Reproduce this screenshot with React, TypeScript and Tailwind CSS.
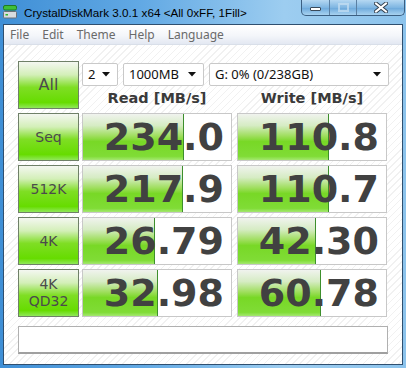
import { ReactNode } from "react";

interface Row {
  label: ReactNode;
  read: string;
  write: string;
  readBar: number;
  writeBar: number;
}

const rows: Row[] = [
  { label: "Seq", read: "234.0", write: "110.8", readBar: 101, writeBar: 91 },
  { label: "512K", read: "217.9", write: "110.7", readBar: 100, writeBar: 91 },
  { label: "4K", read: "26.79", write: "42.30", readBar: 72, writeBar: 78 },
  {
    label: (
      <span className="flex flex-col items-center leading-[17px]">
        <span>4K</span>
        <span>QD32</span>
      </span>
    ),
    read: "32.98",
    write: "60.78",
    readBar: 75,
    writeBar: 83,
  },
];

const LabelButton = ({ children, big }: { children: ReactNode; big?: boolean }) => (
  <div
    className={`w-[61px] h-[48px] shrink-0 border border-[#6f8068] bg-[linear-gradient(to_bottom,#f4f7f1_0%,#d3efb8_28%,#7fde24_55%,#66dc00_88%,#90e85a_100%)] flex items-center justify-center text-[#4b4b4b] [font-family:'DejaVu_Sans',sans-serif] ${big ? "text-[16px]" : "text-[14px]"}`}
  >
    {children}
  </div>
);

const ResultCell = ({ value, bar }: { value: string; bar: number }) => (
  <div className="relative w-[150px] h-[48px] shrink-0 border border-[#c8c8c8] bg-white overflow-hidden flex items-center justify-end pr-[7px]">
    <div
      className="absolute left-0 top-0 bottom-0 border-r border-[#3d8f2c] bg-[linear-gradient(to_bottom,#f0f3ee_0%,#d6ecc4_25%,#9ede5c_48%,#78d826_60%,#80dc36_92%,#a4e870_100%)]"
      style={{ width: bar }}
    />
    <span className="relative text-[38px] leading-none font-bold text-[#414141] [font-family:'DejaVu_Sans',sans-serif]">
      {value}
    </span>
  </div>
);

const Arrow = () => (
  <svg width="8" height="5" viewBox="0 0 8 5">
    <path d="M0 0 H8 L4 4.5 Z" fill="#111" />
  </svg>
);

const Select = ({ text, width }: { text: string; width: string }) => (
  <div
    className={`${width} h-[23px] shrink-0 bg-white border border-[#c9c9c9] rounded-[2px] flex items-center justify-between pl-[5px] pr-[7px] text-[13px] text-[#111] [font-family:'Noto_Sans',sans-serif]`}
  >
    <span>{text}</span>
    <Arrow />
  </div>
);

const TitleIcon = () => (
  <svg width="14" height="14" viewBox="0 0 14 14">
    <rect x="0.5" y="0.5" width="13" height="4.5" rx="1.5" fill="#3fbf3a" stroke="#1f7a24" />
    <rect x="0.5" y="6.5" width="13" height="6.5" rx="1" fill="#d9dcdf" stroke="#6b7178" />
    <rect x="2.5" y="9" width="2.5" height="1.5" fill="#2fb52f" />
  </svg>
);

export default function App() {
  return (
    <div className="w-[406px] h-[368px] overflow-hidden flex flex-col bg-[linear-gradient(to_right,#3f8fd6_0%,#62a9e4_35%,#9dcdf0_70%,#8cc3ec_100%)] [font-family:'Noto_Sans',sans-serif]">
      {/* title bar */}
      <div className="h-[24px] shrink-0 flex items-start">
        <div className="pt-[5px] pl-[3px]">
          <TitleIcon />
        </div>
        <span className="ml-[7px] mt-[4px] text-[11.7px] text-black [font-family:'Liberation_Sans',sans-serif] whitespace-nowrap">
          CrystalDiskMark 3.0.1 x64 &lt;All 0xFF, 1Fill&gt;
        </span>
        <div className="ml-auto mr-[1px] flex h-[16px] border border-t-0 border-[#3b5f82] rounded-b-[5px] overflow-hidden bg-[linear-gradient(to_bottom,#b5d8f2,#7fb6e2_50%,#6aa7da_51%,#a8d2f0)]">
          <div className="w-[28px] flex items-center justify-center border-r border-[#5a7fa2]">
            <div className="w-[11px] h-[4px] mt-[3px] bg-white border border-[#3a4a5a] rounded-[1px]" />
          </div>
          <div className="w-[27px] flex items-center justify-center border-r border-[#5a7fa2]">
            <div className="w-[11px] h-[9px] border-2 border-[#c8dff2] opacity-70" />
          </div>
          <div className="w-[47px] flex items-center justify-center">
            <svg width="14" height="11" viewBox="0 0 14 11">
              <path d="M2 1.5 L12 9.5 M12 1.5 L2 9.5" stroke="#33414f" strokeWidth="4" strokeLinecap="square" />
              <path d="M2 1.5 L12 9.5 M12 1.5 L2 9.5" stroke="#fff" strokeWidth="2" strokeLinecap="square" />
            </svg>
          </div>
        </div>
      </div>

      {/* client area */}
      <div className="mx-[3px] h-[341px] shrink-0 border border-[#2f4f6f] bg-white flex flex-col">
        <div className="h-[20px] shrink-0 flex items-center pl-[6px] gap-[13px] text-[12px] text-[#6a6a6a] bg-[linear-gradient(to_bottom,#ffffff,#f4f6fa_55%,#e3e8f2)] border-b border-[#d9dfe9]">
          <span>File</span>
          <span>Edit</span>
          <span>Theme</span>
          <span>Help</span>
          <span>Language</span>
        </div>

        <div className="flex-1 pl-[14px] pt-[16px] bg-[repeating-linear-gradient(135deg,#ffffff_0px,#ffffff_4px,#f1f1f1_4px,#f1f1f1_5px)]">
          <div className="flex">
            <LabelButton big>All</LabelButton>
            <div className="ml-[3px] flex flex-col">
              <div className="flex mt-[2px] gap-[5px]">
                <Select text="2" width="w-[36px]" />
                <Select text="1000MB" width="w-[81px]" />
                <Select text="G: 0% (0/238GB)" width="w-[180px]" />
              </div>
              <div className="flex mt-[3px] h-[20px] items-center gap-[5px] text-[14.5px] font-bold text-[#3a3a3a] [font-family:'DejaVu_Sans',sans-serif]">
                <div className="w-[150px] text-center">Read [MB/s]</div>
                <div className="w-[150px] text-center">Write [MB/s]</div>
              </div>
            </div>
          </div>

          <div className="flex flex-col gap-[4px] mt-[4px]">
            {rows.map((row, i) => (
              <div key={i} className="flex">
                <LabelButton>{row.label}</LabelButton>
                <div className="ml-[3px]">
                  <ResultCell value={row.read} bar={row.readBar} />
                </div>
                <div className="ml-[5px]">
                  <ResultCell value={row.write} bar={row.writeBar} />
                </div>
              </div>
            ))}
          </div>

          <div className="mt-[9px] w-[370px] h-[28px] bg-white border border-[#b0b0b0] border-b-2 border-b-[#a0a0a0]" />
        </div>
      </div>
    </div>
  );
}
